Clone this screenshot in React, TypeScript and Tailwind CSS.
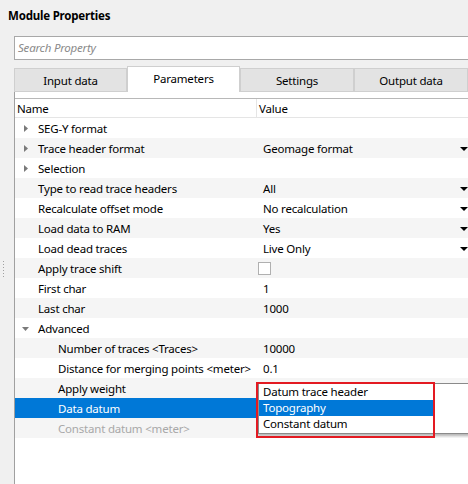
import React from "react";

type Row = {
  name: string;
  level: 0 | 1;
  arrow?: "right" | "down";
  value?: string;
  combo?: boolean;
  checkbox?: boolean;
  selected?: boolean;
  disabled?: boolean;
};

const rows: Row[] = [
  { name: "SEG-Y format", level: 0, arrow: "right" },
  { name: "Trace header format", level: 0, arrow: "right", value: "Geomage format", combo: true },
  { name: "Selection", level: 0, arrow: "right" },
  { name: "Type to read trace headers", level: 0, value: "All", combo: true },
  { name: "Recalculate offset mode", level: 0, value: "No recalculation", combo: true },
  { name: "Load data to RAM", level: 0, value: "Yes", combo: true },
  { name: "Load dead traces", level: 0, value: "Live Only", combo: true },
  { name: "Apply trace shift", level: 0, checkbox: true },
  { name: "First char", level: 0, value: "1" },
  { name: "Last char", level: 0, value: "1000" },
  { name: "Advanced", level: 0, arrow: "down" },
  { name: "Number of traces <Traces>", level: 1, value: "10000" },
  { name: "Distance for merging points <meter>", level: 1, value: "0.1" },
  { name: "Apply weight", level: 1 },
  { name: "Data datum", level: 1, selected: true },
  { name: "Constant datum <meter>", level: 1, disabled: true },
];

function ArrowRight() {
  return (
    <svg width="4" height="7" viewBox="0 0 4 7" className="shrink-0">
      <path d="M0 0 L4 3.5 L0 7 Z" fill="#7a7a7a" />
    </svg>
  );
}
function ArrowDown() {
  return (
    <svg width="7" height="4" viewBox="0 0 7 4" className="shrink-0">
      <path d="M0 0 L7 0 L3.5 4 Z" fill="#7a7a7a" />
    </svg>
  );
}
function ComboArrow() {
  return (
    <svg width="8" height="4" viewBox="0 0 8 4" className="shrink-0">
      <path d="M0 0 L8 0 L4 4 Z" fill="#000" />
    </svg>
  );
}

export default function App() {
  return (
    <div
      className="relative w-[468px] h-[484px] overflow-hidden bg-[#f0f0f0] text-[11.5px] tracking-[-0.2px] text-black flex flex-col"
      style={{ fontFamily: '"Noto Sans", "DejaVu Sans", sans-serif' }}
    >
      <div className="pl-[8px] pt-[7px] h-[36px] font-bold leading-[18px]">Module Properties</div>
      <div className="ml-[14px] h-[24px] w-[470px] bg-white border border-[#a8a8a8] flex items-center pl-[3px] italic text-[#8a8a8a]">
        Search Property
      </div>
      <div className="ml-[14px] mt-[6px] flex items-end h-[26px]">
        <div className="w-[113px] h-[24px] bg-[#e3e3e3] border border-[#cfcfcf] flex items-center justify-center pt-[1px]">Input data</div>
        <div className="w-[113px] h-[26px] bg-white border border-b-0 border-[#cfcfcf] flex items-center justify-center pb-[2px]">Parameters</div>
        <div className="w-[114px] h-[24px] bg-[#e3e3e3] border border-[#cfcfcf] flex items-center justify-center pt-[1px]">Settings</div>
        <div className="w-[114px] h-[24px] bg-[#e3e3e3] border border-[#cfcfcf] flex items-center justify-center shrink-0 pt-[1px]">Output data</div>
      </div>
      <div className="ml-[14px] flex-1 bg-white border-l border-[#a0a0a0] pt-[6px] flex flex-col">
        <div className="border-t border-[#b8b8b8] flex-1 flex flex-col">
          <div className="h-[19px] flex border-b border-[#e5e5e5] bg-white">
            <div className="w-[242px] pl-[2px] flex items-center border-r border-[#e5e5e5] pt-[1px]">Name</div>
            <div className="pl-[2px] flex items-center pt-[1px]">Value</div>
          </div>
          {rows.map((r, i) => {
            const bg = r.selected ? "bg-[#0078d7] text-white" : i % 2 === 1 ? "bg-[#f5f5f5]" : "bg-white";
            return (
              <div key={i} className={`h-[20px] flex pt-[1px] ${bg}`}>
                <div className={`w-[242px] flex items-center ${r.level === 1 ? "pl-[43px]" : "pl-[9px]"}`}>
                  {r.level === 0 && (
                    <div className="w-[14px] flex items-center">
                      {r.arrow === "right" && <ArrowRight />}
                      {r.arrow === "down" && (
                        <div className="-ml-[2px]">
                          <ArrowDown />
                        </div>
                      )}
                    </div>
                  )}
                  <span className={`whitespace-nowrap ${r.disabled ? "text-[#a8a8a8]" : ""}`}>{r.name}</span>
                </div>
                <div className="flex-1 flex items-center justify-between">
                  {r.checkbox ? (
                    <div className="ml-[1px] w-[13px] h-[13px] border border-[#b0b0b0] bg-white" />
                  ) : (
                    <span className="pl-[6px] whitespace-nowrap">{r.value ?? ""}</span>
                  )}
                  {r.combo && <ComboArrow />}
                </div>
              </div>
            );
          })}
        </div>
      </div>

      {/* splitter handle dots */}
      <div className="absolute left-[3px] top-[261px] flex flex-col gap-[2px]">
        {[0, 1, 2, 3, 4, 5].map((k) => (
          <div key={k} className="w-[1px] h-[1px] bg-[#a0a0a0]" />
        ))}
      </div>

      {/* dropdown popup */}
      <div className="absolute left-[258px] top-[383px] w-[220px] h-[51px] bg-white border border-[#8a8a8a] shadow-[0_2px_2px_rgba(0,0,0,0.25)] flex flex-col">
        <div className="h-[16px] flex items-center pl-[4px]">Datum trace header</div>
        <div className="h-[16px] flex items-center pl-[4px] bg-[#0078d7] text-white w-[176px]">Topography</div>
        <div className="h-[16px] flex items-center pl-[4px]">Constant datum</div>
      </div>
      {/* red annotation */}
      <div className="absolute left-[256px] top-[382px] w-[179px] h-[56px] border-[2px] border-[#e31a22]" />
    </div>
  );
}
